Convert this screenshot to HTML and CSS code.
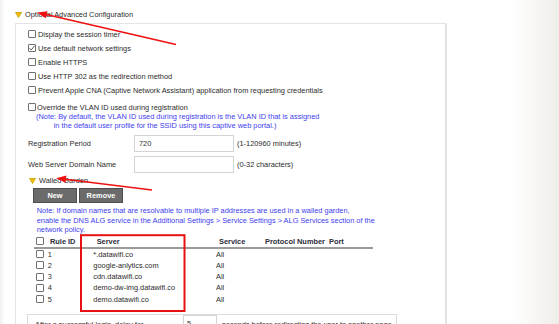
FILE: index.html
```html
<!DOCTYPE html>
<html>
<head>
<meta charset="utf-8">
<link rel="stylesheet" href="styles.css">
</head>
<body>
<div class="page">
  <div class="sec-title">
    <svg class="tri" width="7" height="6" viewBox="0 0 7 6"><polygon points="0.5,0.5 6.5,0.5 3.5,5.5" fill="#f2c200" stroke="#c49a00" stroke-width="0.8"/></svg>
    <span>Optional Advanced Configuration</span>
  </div>
  <div class="box">
    <div class="opt"><span class="cb"></span><span>Display the session timer</span></div>
    <div class="opt"><span class="cb"><svg width="8" height="8" viewBox="0 0 8 8"><path d="M1.5 4.2 L3.2 6 L6.6 1.8" fill="none" stroke="#444" stroke-width="0.9"/></svg></span><span>Use default network settings</span></div>
    <div class="opt"><span class="cb"></span><span>Enable HTTPS</span></div>
    <div class="opt"><span class="cb"></span><span>Use HTTP 302 as the redirection method</span></div>
    <div class="opt"><span class="cb"></span><span>Prevent Apple CNA (Captive Network Assistant) application from requesting credentials</span></div>
    <div class="opt opt-vlan"><span class="cb"></span><span>Override the VLAN ID used during registration</span></div>
    <div class="note note-vlan">(Note: By default, the VLAN ID used during registration is the VLAN ID that is assigned<br>in the default user profile for the SSID using this captive web portal.)</div>
    <div class="field field-first"><span class="flabel">Registration Period</span><span class="finput">720</span><span class="fhint">(1-120960 minutes)</span></div>
    <div class="field"><span class="flabel">Web Server Domain Name</span><span class="finput"></span><span class="fhint">(0-32 characters)</span></div>
    <div class="sub-title">
      <svg class="tri" width="7" height="6" viewBox="0 0 7 6"><polygon points="0.5,0.5 6.5,0.5 3.5,5.5" fill="#f2c200" stroke="#c49a00" stroke-width="0.8"/></svg>
      <span>Walled Garden</span>
    </div>
    <div class="btns"><span class="btn">New</span><span class="btn">Remove</span></div>
    <div class="note note-wg">Note: If domain names that are resolvable to multiple IP addresses are used in a walled garden,<br>enable the DNS ALG service in the Additional Settings &gt; Service Settings &gt; ALG Services section of the<br>network policy.</div>
    <div class="tbl">
      <div class="thead">
        <span class="c1 h"><span class="cb"></span></span>
        <span class="c2 h">Rule ID</span>
        <span class="c3 h">Server</span>
        <span class="c4 h">Service</span>
        <span class="c5 h">Protocol Number</span>
        <span class="c6 h">Port</span>
      </div>
      <div class="trow"><span class="c1"><span class="cb"></span></span><span class="c2">1</span><span class="c3">*.datawifi.co</span><span class="c4">All</span><span class="c5"></span><span class="c6"></span></div>
      <div class="trow"><span class="c1"><span class="cb"></span></span><span class="c2">2</span><span class="c3">google-anlytics.com</span><span class="c4">All</span><span class="c5"></span><span class="c6"></span></div>
      <div class="trow"><span class="c1"><span class="cb"></span></span><span class="c2">3</span><span class="c3">cdn.datawifi.co</span><span class="c4">All</span><span class="c5"></span><span class="c6"></span></div>
      <div class="trow"><span class="c1"><span class="cb"></span></span><span class="c2">4</span><span class="c3">demo-dw-img.datawifi.co</span><span class="c4">All</span><span class="c5"></span><span class="c6"></span></div>
      <div class="trow"><span class="c1"><span class="cb"></span></span><span class="c2">5</span><span class="c3">demo.datawifi.co</span><span class="c4">All</span><span class="c5"></span><span class="c6"></span></div>
    </div>
    <div class="delay-box">
      <span class="dlabel">After a successful login, delay for</span><span class="dinput">5</span><span>seconds before redirecting the user to another page</span>
    </div>
  </div>
</div>
<svg class="annot" width="559" height="324" viewBox="0 0 559 324">
  <line x1="176" y1="44.5" x2="44" y2="14" stroke="#ee1111" stroke-width="1.6"/>
  <polygon points="37,12.4 47.6,11.2 45.8,18.2" fill="#ee1111"/>
  <line x1="152" y1="190" x2="63" y2="179" stroke="#ee1111" stroke-width="1.6"/>
  <polygon points="56,178.2 66.4,175.6 65.6,182.8" fill="#ee1111"/>
  <rect x="81" y="235.2" width="103.5" height="75.8" fill="none" stroke="#e81010" stroke-width="2"/>
</svg>
</body>
</html>
```
FILE: styles.css
```css
html, body {
  margin: 0;
  padding: 0;
}
body {
  width: 559px;
  height: 324px;
  overflow: hidden;
  position: relative;
  font-family: "Liberation Sans", Arial, sans-serif;
  font-size: 7.4px;
  color: #2b2b2b;
  background: linear-gradient(to right, #f1f1f1 0px, #ffffff 5px, #ffffff 512px, #efedea 559px);
}
.page {
  padding: 10px 0 0 15px;
}
.sec-title {
  display: flex;
  align-items: center;
  gap: 3px;
  height: 9px;
}
.tri {
  display: block;
  flex: none;
}
.box {
  margin-top: 4px;
  width: 432px;
  height: 320px;
  box-sizing: border-box;
  border: 1px solid #e4e4e4;
  border-right-width: 2px;
  background: #fff;
  padding: 3px 0 0 12px;
}
.opt {
  display: flex;
  align-items: center;
  gap: 2px;
  height: 14px;
}
.cb {
  display: inline-block;
  box-sizing: border-box;
  width: 8px;
  height: 8px;
  border: 1px solid #707070;
  border-radius: 1px;
  background: #fff;
  position: relative;
  flex: none;
}
.cb svg {
  position: absolute;
  left: -1px;
  top: -1px;
}
.opt-vlan {
  margin-top: 5px;
  height: 10px;
  gap: 1px;
}
.note {
  color: #3d3def;
  line-height: 9px;
}
.note-vlan {
  padding-left: 25.7px;
  text-indent: -17.7px;
}
.field {
  display: flex;
  align-items: center;
  height: 17px;
  margin-top: 4px;
}
.field-first {
  margin-top: 4.5px;
}
.flabel {
  width: 106px;
  flex: none;
}
.finput {
  box-sizing: border-box;
  width: 100px;
  height: 17px;
  border: 1px solid #d4d4d4;
  background: #fff;
  padding-left: 4px;
  line-height: 15px;
  flex: none;
  color: #333;
}
.fhint {
  margin-left: 3px;
}
.sub-title {
  display: flex;
  align-items: center;
  gap: 3px;
  height: 10px;
  margin-top: 3px;
  padding-left: 1px;
}
.btns {
  display: flex;
  gap: 2px;
  margin-top: 2px;
  margin-left: 5px;
}
.btn {
  box-sizing: border-box;
  width: 44px;
  height: 15px;
  background: #6b6b6b;
  border: 1px solid #4e4e4e;
  color: #fff;
  font-weight: bold;
  text-align: center;
  line-height: 13px;
}
.note-wg {
  margin-top: 3.5px;
  margin-left: 8.7px;
  line-height: 9.5px;
}
.tbl {
  margin-left: 6px;
  width: 339px;
  margin-top: 1px;
}
.thead, .trow {
  display: grid;
  grid-template-columns: 12px 45px 122px 49px 64px 47px;
  align-items: center;
}
.thead {
  height: 11px;
  border-bottom: 2px solid #9a9a9a;
  font-weight: bold;
  color: #2c2c3a;
}
.trow {
  height: 11.25px;
}
.thead .c1 { padding-left: 1.7px; }
.thead .c2 { padding-left: 4px; }
.thead .c3 { padding-left: 5.7px; }
.thead .c4 { padding-left: 6px; }
.thead .c5 { padding-left: 3px; }
.thead .c6 { padding-left: 3px; }
.trow .c1 { padding-left: 2px; }
.trow .c2 { padding-left: 1.7px; }
.trow .c3 { padding-left: 2.3px; }
.trow .c4 { padding-left: 3px; }
.c1 {
  display: flex;
  align-items: center;
}
.delay-box {
  margin-top: 9px;
  margin-left: -1px;
  width: 370px;
  height: 30px;
  box-sizing: border-box;
  border: 1px solid #dcdcdc;
  padding: 0 0 0 7px;
  display: flex;
  align-items: flex-start;
}
.dlabel {
  width: 148px;
  flex: none;
  margin-top: 5px;
}
.dinput {
  box-sizing: border-box;
  width: 34px;
  height: 17px;
  border: 1px solid #d4d4d4;
  padding-left: 3px;
  line-height: 15px;
  flex: none;
  margin-right: 5px;
}
.delay-box > span:last-child {
  margin-top: 5px;
}
.annot {
  position: absolute;
  left: 0;
  top: 0;
  pointer-events: none;
}
```
